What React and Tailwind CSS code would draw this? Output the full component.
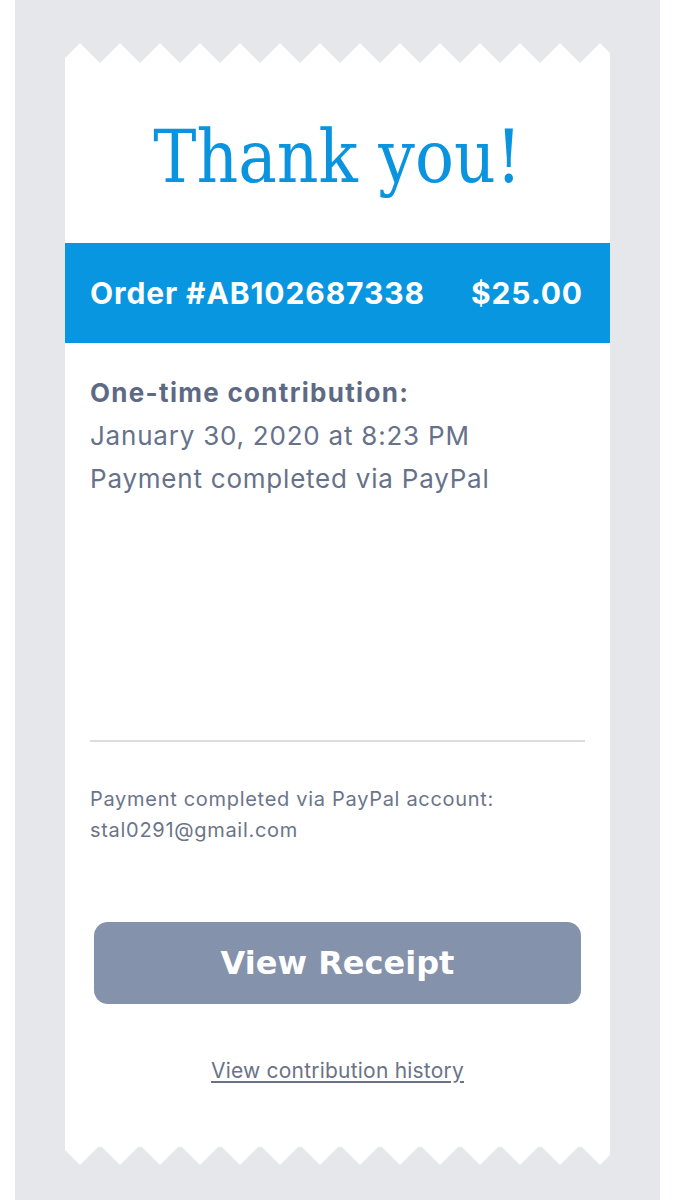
const W = 545;

function depth(x) {
  const m = (((x - 15) % 40) + 40) % 40;
  return m > 20 ? 40 - m : m;
}

function zigzag(bottom) {
  // triangle wave, period 40, tips at x = 15 + 40k
  const xs = [];
  for (let x = 0; x <= W; x += 5) xs.push(x);
  if (xs[xs.length - 1] !== W) xs.push(W);
  if (bottom) {
    return `0,0 ${xs.map((x) => `${x},${18 - depth(x)}`).join(' ')} ${W},0`;
  }
  return `${xs.map((x) => `${x},${depth(x)}`).join(' ')} ${W},20 0,20`;
}

function Edge({ bottom }) {
  return (
    <svg width={W} height={bottom ? 18 : 20} className="block">
      <polygon points={zigzag(bottom)} fill="#ffffff" />
    </svg>
  );
}

export default function App() {
  return (
    <div className="w-[675px] h-[1200px] bg-white flex justify-center">
      <div className="w-[645px] h-full bg-[#e5e7eb] pt-[43px] px-[50px]">
        <Edge />
        <div className="bg-white w-[545px] pt-[59px] pb-[64px]" style={{ fontFamily: 'Inter, "Liberation Sans", sans-serif' }}>
          <h1
            className="text-center text-[72px] leading-[71px] text-[#0a94df]"
            style={{ fontFamily: '"DejaVu Serif Condensed", "DejaVu Serif", serif', fontStretch: 'condensed' }}
          >
            Thank you!
          </h1>

          <div className="mt-[50px] h-[100px] bg-[#0896e1] flex items-center justify-between pl-[25px] pr-[27px] text-white font-bold text-[30px] tracking-[0.03em]">
            <span>Order #AB102687338</span>
            <span>$25.00</span>
          </div>

          <div className="pt-[28px] px-[25px] text-[26px] leading-[43px] tracking-[0.03em] text-[#66718a]">
            <p className="font-bold tracking-[0.05em] text-[#5e6a83]">One-time contribution:</p>
            <p>January 30, 2020 at 8:23 PM</p>
            <p>Payment completed via PayPal</p>
          </div>

          <div className="mt-[240px] mx-[25px] h-[2px] bg-[#d9dce1]" />

          <div className="mt-[42px] px-[25px] text-[20px] leading-[31px] tracking-[0.035em] text-[#6b7589]">
            <p>Payment completed via PayPal account:</p>
            <p>stal0291@gmail.com</p>
          </div>

          <div className="mt-[76px] px-[29px]">
            <button
              className="w-full h-[82px] rounded-[14px] bg-[#8592ab] text-white font-bold text-[32px]"
              style={{ fontFamily: '"DejaVu Sans", Verdana, sans-serif' }}
            >
              View Receipt
            </button>
          </div>

          <div className="mt-[54px] text-center text-[21px] leading-[25px] tracking-[0.01em]">
            <a href="#" className="underline underline-offset-[3px] text-[#6b7287]">
              View contribution history
            </a>
          </div>
        </div>
        <Edge bottom />
      </div>
    </div>
  );
}
